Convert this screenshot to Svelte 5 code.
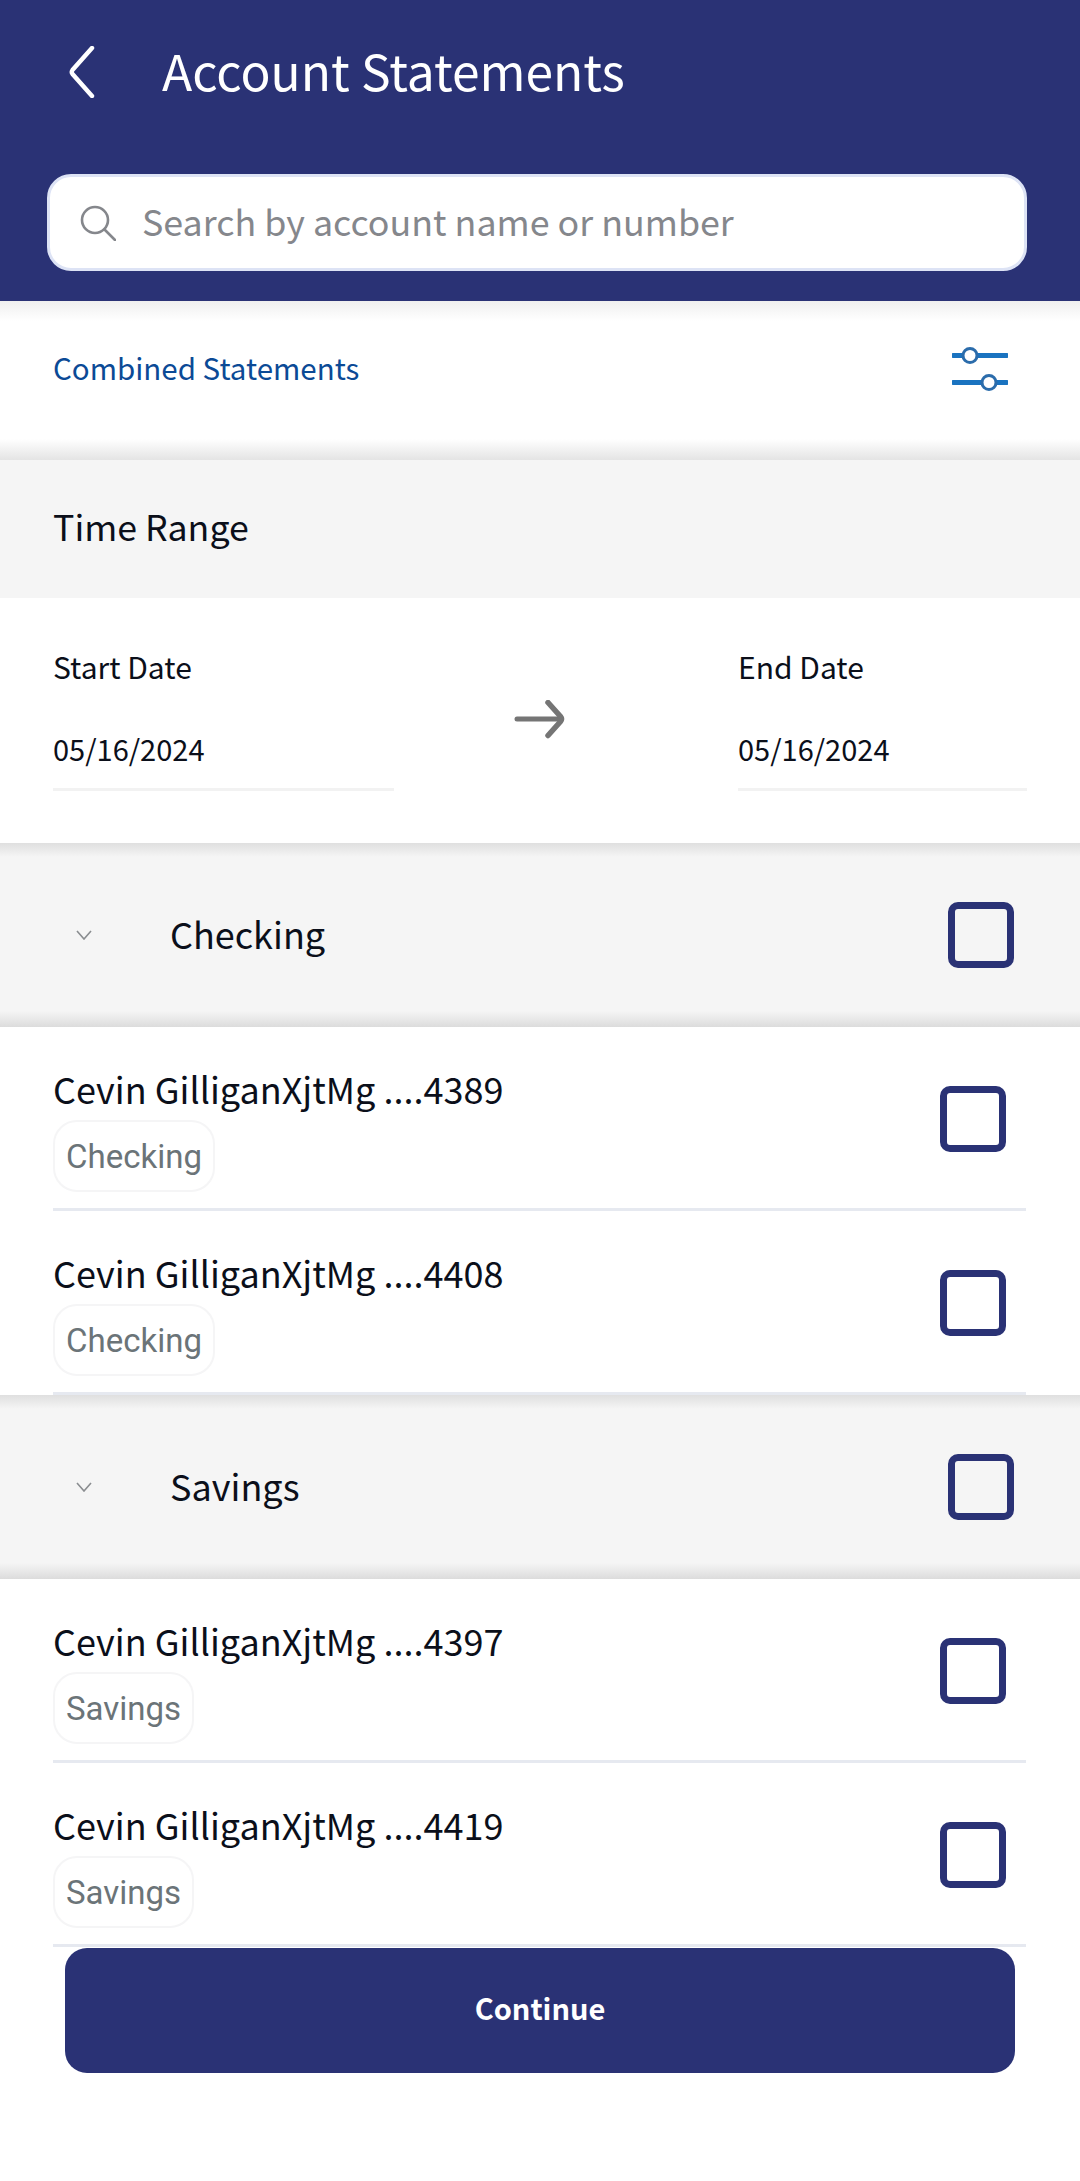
<script>
	const groups = [
		{
			name: 'Checking',
			accounts: [
				{ name: 'Cevin GilliganXjtMg ....4389' },
				{ name: 'Cevin GilliganXjtMg ....4408' }
			]
		},
		{
			name: 'Savings',
			accounts: [
				{ name: 'Cevin GilliganXjtMg ....4397' },
				{ name: 'Cevin GilliganXjtMg ....4419' }
			]
		}
	];
</script>

<div class="screen">
	<header class="header">
		<div class="title-row">
			<svg class="back" width="28" height="52" viewBox="0 0 28 52" fill="none">
				<path d="M24 2 L4.5 24 Q3 26 4.5 28 L24 50" stroke="#fff" stroke-width="4.4" stroke-linecap="round" />
			</svg>
			<h1>Account Statements</h1>
		</div>
		<div class="search">
			<svg width="36" height="36" viewBox="0 0 36 36" fill="none">
				<circle cx="15" cy="15" r="13" stroke="#85878c" stroke-width="2.6" />
				<path d="M24.5 24.5 L35 35" stroke="#85878c" stroke-width="2.6" stroke-linecap="round" />
			</svg>
			<span>Search by account name or number</span>
		</div>
	</header>

	<div class="filter-row">
		<span class="combined">Combined Statements</span>
		<svg width="56" height="46" viewBox="0 0 56 46" fill="none">
			<path d="M1 8.5 H55 M1 35.5 H55" stroke="#1a73c0" stroke-width="5" stroke-linecap="round" />
			<circle cx="18" cy="8.5" r="7" fill="#fff" stroke="#2b6cab" stroke-width="3" />
			<circle cx="37" cy="35.5" r="7" fill="#fff" stroke="#2b6cab" stroke-width="3" />
		</svg>
	</div>

	<div class="range-title"><span>Time Range</span></div>

	<div class="dates">
		<div class="date start">
			<span class="date-label">Start Date</span>
			<span class="date-value">05/16/2024</span>
		</div>
		<svg class="arrow" width="54" height="42" viewBox="0 0 54 42" fill="none">
			<path d="M5 19 H49" stroke="#757575" stroke-width="5" stroke-linecap="round" />
			<path d="M36 2.5 L48.5 16.5 Q50.5 19 48.5 21.5 L36 35.5" stroke="#757575" stroke-width="5.5" stroke-linecap="round" />
		</svg>
		<div class="date end">
			<span class="date-label">End Date</span>
			<span class="date-value">05/16/2024</span>
		</div>
	</div>

	{#each groups as group}
		<section>
			<div class="group-head">
				<svg class="chevron" width="16" height="10" viewBox="0 0 16 10" fill="none">
					<path d="M1 1 L8 9 L15 1" stroke="#8a8d90" stroke-width="1.6" />
				</svg>
				<span class="group-name">{group.name}</span>
				<span class="box"></span>
			</div>
			{#each group.accounts as account}
				<div class="account">
					<div class="account-body">
						<div class="account-name">{account.name}</div>
						<span class="chip">{group.name}</span>
					</div>
					<span class="box"></span>
				</div>
			{/each}
		</section>
	{/each}

	<div class="footer">
		<button type="button" class="continue">Continue</button>
	</div>
</div>

<style>
	:global(body) {
		margin: 0;
		background: #fff;
	}

	.screen {
		width: 1080px;
		height: 2181px;
		overflow: hidden;
		background: #fff;
		font-family: 'Noto Sans CJK SC', 'Noto Sans', sans-serif;
		color: #0b0f1a;
	}

	.header {
		height: 301px;
		box-sizing: border-box;
		background: #2a3275;
		padding: 46px 53px 0 47px;
	}

	.title-row {
		display: flex;
		align-items: center;
		height: 52px;
		padding-left: 21px;
	}

	.back {
		flex-shrink: 0;
	}

	h1 {
		margin: 0 0 6px 66px;
		font-size: 49.7px;
		font-weight: 400;
		line-height: 52px;
		color: #fff;
		white-space: nowrap;
	}

	.search {
		display: flex;
		align-items: center;
		gap: 26px;
		height: 97px;
		box-sizing: border-box;
		margin-top: 76px;
		padding-left: 30px;
		background: #fff;
		border: 3px solid #dde3f5;
		border-radius: 24px;
		font-size: 35.8px;
		color: #85878c;
	}

	.search span {
		margin-bottom: 6px;
	}

	.filter-row {
		display: flex;
		align-items: center;
		justify-content: space-between;
		height: 159px;
		box-sizing: border-box;
		padding: 0 72px 22px 53px;
		background: linear-gradient(#efefef, #fff 20px, #fff 138px, #e4e4e4);
	}

	.combined {
		margin-bottom: 6px;
		font-size: 29.5px;
		color: #0b4a96;
	}

	.range-title {
		display: flex;
		align-items: center;
		height: 138px;
		padding-left: 53px;
		background: #f5f5f5;
		font-size: 35.7px;
	}

	.range-title span {
		margin-bottom: 8px;
	}

	.dates {
		display: flex;
		height: 245px;
		box-sizing: border-box;
		padding: 47px 53px 0;
	}

	.date {
		display: flex;
		flex-direction: column;
		height: 146px;
		box-sizing: border-box;
		border-bottom: 3px solid #f2f2f2;
	}

	.date.start {
		width: 341px;
	}

	.date.end {
		width: 289px;
		margin-left: auto;
	}

	.date-label {
		font-size: 30px;
		line-height: 42px;
	}

	.date-value {
		margin-top: 40px;
		font-size: 29px;
		line-height: 42px;
	}

	.arrow {
		margin: 55px 0 0 118px;
	}

	.group-head {
		display: flex;
		align-items: center;
		height: 184px;
		box-sizing: border-box;
		padding: 0 66px 0 76px;
		background: linear-gradient(#dfdfdf, #f5f5f5 14px, #f5f5f5 168px, #dcdcdc);
	}

	.chevron {
		flex-shrink: 0;
	}

	.group-name {
		flex: 1;
		margin: 0 0 4px 78px;
		font-size: 36px;
	}

	.box {
		flex-shrink: 0;
		width: 66px;
		height: 66px;
		box-sizing: border-box;
		border: 7px solid #2a3275;
		border-radius: 10px;
	}

	.account {
		display: flex;
		height: 184px;
		box-sizing: border-box;
		margin: 0 54px 0 53px;
		padding: 41px 20px 0 0;
		border-bottom: 3px solid #e6e9f0;
		justify-content: space-between;
	}

	.account .box {
		margin-top: 18px;
	}

	.account-name {
		font-size: 36px;
		line-height: 40px;
	}

	.chip {
		display: inline-flex;
		align-items: center;
		height: 72px;
		box-sizing: border-box;
		margin-top: 12px;
		padding: 0 11px;
		border: 2px solid #f5f5f6;
		border-radius: 24px;
		font-family: Roboto, sans-serif;
		font-size: 33px;
		color: #6b7478;
	}

	.footer {
		padding: 1px 65px 0;
	}

	.continue {
		display: block;
		width: 100%;
		height: 125px;
		padding: 0 0 7px;
		border: 0;
		border-radius: 22px;
		background: #2a3275;
		color: #fff;
		font-family: inherit;
		font-size: 29px;
		font-weight: 700;
	}
</style>
